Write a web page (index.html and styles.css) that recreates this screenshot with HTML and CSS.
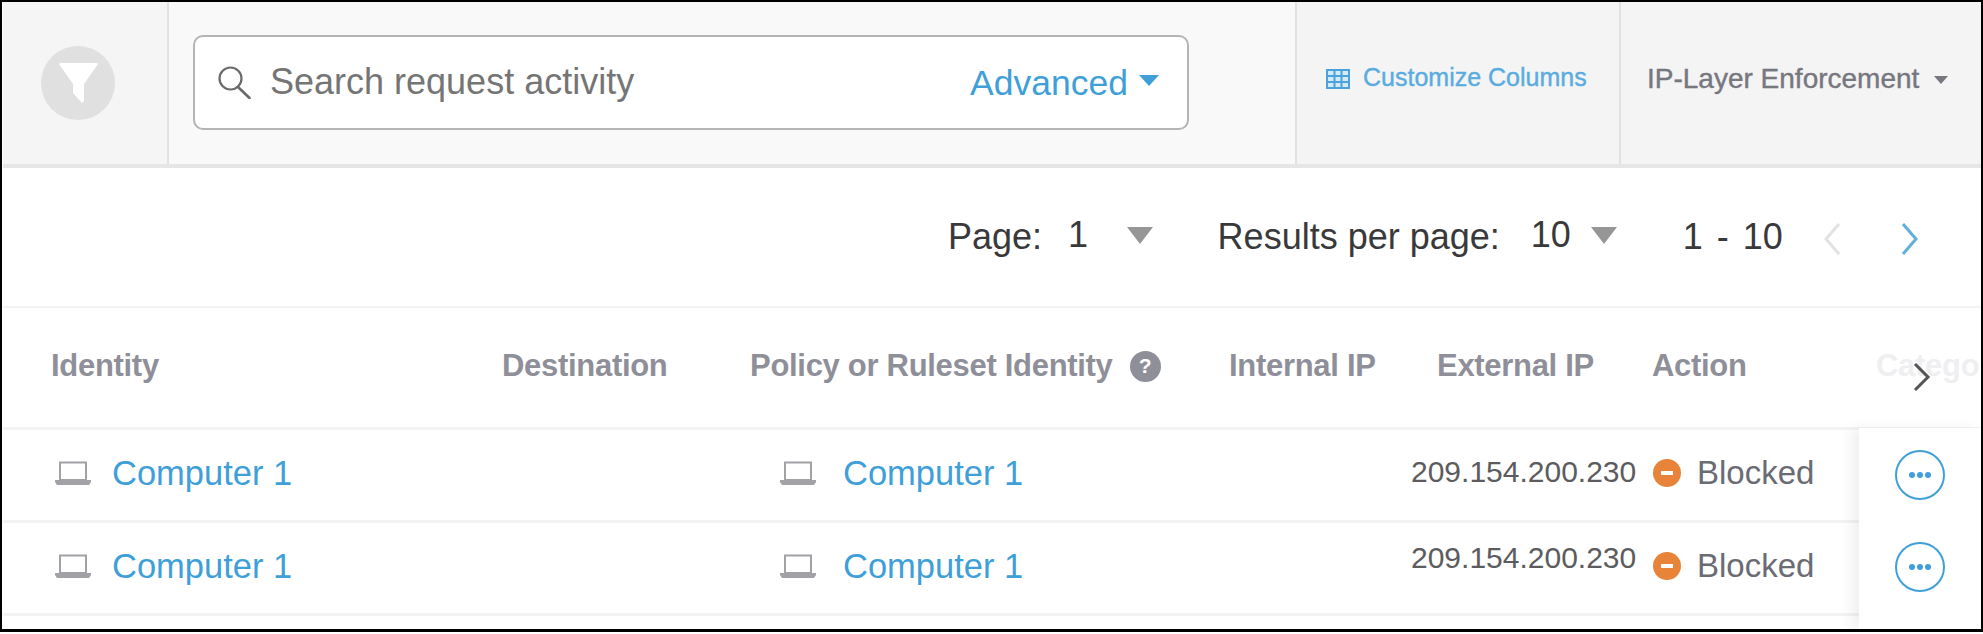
FILE: index.html
```html
<!DOCTYPE html>
<html lang="en">
<head>
<meta charset="utf-8">
<title>Request activity</title>
<link rel="stylesheet" href="styles.css">
</head>
<body>
<div class="frame">
  <header class="toolbar">
    <div class="filter-cell">
      <div class="filter-btn">
        <svg width="39" height="40" viewBox="0 0 39 40"><path d="M1 0H38L39 1L25 21V38L23 40L14 30V21L0 1Z" fill="#fff"/></svg>
      </div>
    </div>
    <div class="search-cell">
      <div class="search-box">
        <svg class="search-icon" width="33" height="33" viewBox="0 0 33 33"><circle cx="12.500" cy="12.500" r="11" fill="none" stroke="#6a6a6a" stroke-width="2.200"/><path d="M20 21l11.500 11" stroke="#6a6a6a" stroke-width="2.600" stroke-linecap="round"/></svg>
        <span class="search-text">Search request activity</span>
        <span class="advanced">Advanced</span>
        <span class="tri tri-blue"></span>
      </div>
    </div>
    <div class="cust-cell">
      <svg width="24" height="20" viewBox="0 0 24 20"><path d="M1 1h22v18H1zM1 7h22M1 13h22M8.500 1v18M15.500 1v18" fill="#d5e9f6" stroke="#4aa3da" stroke-width="2"/></svg>
      <span class="cust-text">Customize Columns</span>
    </div>
    <div class="layer-cell">
      <span class="layer-text">IP-Layer Enforcement</span>
      <span class="tri tri-small"></span>
    </div>
  </header>

  <div class="pager">
    <span class="pg-label">Page:</span>
    <span class="pg-val pg-one">1</span>
    <span class="tri tri-gray tri-page"></span>
    <span class="pg-label">Results per page:</span>
    <span class="pg-val pg-ten">10</span>
    <span class="tri tri-gray tri-results"></span>
    <span class="pg-range">1 - 10</span>
    <svg class="chev-l" width="20" height="32" viewBox="0 0 20 32"><path d="M17 1L4 16l13 15" fill="none" stroke="#e2e2e2" stroke-width="3"/></svg>
    <svg class="chev-r" width="20" height="32" viewBox="0 0 20 32"><path d="M3 1l13 15L3 31" fill="none" stroke="#63aedd" stroke-width="3"/></svg>
  </div>

  <div class="table">
    <div class="row head">
      <span class="th">Identity</span>
      <span class="th">Destination</span>
      <span class="th th-policy">Policy or Ruleset Identity <span class="help">?</span></span>
      <span class="th">Internal IP</span>
      <span class="th">External IP</span>
      <span class="th">Action</span>
      <span class="th th-cat">Catego</span>
    </div>
    <div class="row">
      <span class="cell"><svg class="laptop" width="36" height="24" viewBox="0 0 36 24"><path d="M5 1.500h26V19H5z" fill="none" stroke="#a2a2a6" stroke-width="2"/><path d="M0 19h36v2l-2 3H2l-2-3z" fill="#a2a2a6"/></svg><a class="link">Computer 1</a></span>
      <span class="cell"></span>
      <span class="cell cell-policy"><svg class="laptop" width="36" height="24" viewBox="0 0 36 24"><path d="M5 1.500h26V19H5z" fill="none" stroke="#a2a2a6" stroke-width="2"/><path d="M0 19h36v2l-2 3H2l-2-3z" fill="#a2a2a6"/></svg><a class="link">Computer 1</a></span>
      <span class="cell"></span>
      <span class="cell ip">209.154.200.230</span>
      <span class="cell"><span class="blocked-dot"></span><span class="blocked">Blocked</span></span>
    </div>
    <div class="row">
      <span class="cell"><svg class="laptop" width="36" height="24" viewBox="0 0 36 24"><path d="M5 1.500h26V19H5z" fill="none" stroke="#a2a2a6" stroke-width="2"/><path d="M0 19h36v2l-2 3H2l-2-3z" fill="#a2a2a6"/></svg><a class="link">Computer 1</a></span>
      <span class="cell"></span>
      <span class="cell cell-policy"><svg class="laptop" width="36" height="24" viewBox="0 0 36 24"><path d="M5 1.500h26V19H5z" fill="none" stroke="#a2a2a6" stroke-width="2"/><path d="M0 19h36v2l-2 3H2l-2-3z" fill="#a2a2a6"/></svg><a class="link">Computer 1</a></span>
      <span class="cell"></span>
      <span class="cell ip ip-raised">209.154.200.230</span>
      <span class="cell"><span class="blocked-dot"></span><span class="blocked">Blocked</span></span>
    </div>
    <svg class="scroll-chev" width="18" height="28" viewBox="0 0 18 28"><path d="M2 1l13 13L2 27" fill="none" stroke="#555" stroke-width="3"/></svg>
    <div class="sticky">
      <button class="more"><i></i><i></i><i></i></button>
      <button class="more"><i></i><i></i><i></i></button>
    </div>
  </div>
</div>
</body>
</html>
```
FILE: styles.css
```css
* { box-sizing: border-box; }
html, body { margin: 0; height: 100%; background: #fff; }
body { font-family: "Liberation Sans", Arial, sans-serif; overflow: hidden; }

.frame {
  width: 1983px;
  height: 632px;
  border-style: solid;
  border-color: #000;
  border-width: 2px 2px 3px 2px;
  padding-left: 1px;
  background: #fff;
  overflow: hidden;
  display: flex;
  flex-direction: column;
}

.toolbar {
  height: 166px;
  flex: none;
  display: flex;
  background: #f9f9f9;
  border-bottom: 4px solid #e6e6e6;
}
.filter-cell {
  width: 166px;
  background: #f5f5f5;
  border-right: 2px solid #e2e2e2;
  display: flex;
  align-items: center;
  padding-left: 38px;
}
.filter-btn {
  width: 74px;
  height: 74px;
  border-radius: 50%;
  background: #e0e0e0;
  display: flex;
  align-items: center;
  justify-content: center;
}
.search-cell {
  width: 1126px;
  padding: 33px 0 0 24px;
}
.search-box {
  width: 996px;
  height: 95px;
  background: #fff;
  border: 2px solid #b4b4b4;
  border-radius: 10px;
  display: flex;
  align-items: center;
  padding: 0 28px 0 23px;
  font-size: 36px;
}
.search-icon { flex: none; margin-top: -1px; }
.search-text { margin-left: 19px; margin-top: -1px; color: #757575; flex: 1; }
.advanced { color: #3f9fd9; font-size: 35.500px; margin-top: 1px; }
.tri { display: inline-block; width: 0; height: 0; border-style: solid; border-color: transparent; }
.tri-blue { border-width: 11px 10px 0; border-top-color: #3f9fd9; margin: 0 0 4px 11px; }
.cust-cell {
  width: 324px;
  background: #f4f4f4;
  border-left: 2px solid #e2e2e2;
  display: flex;
  align-items: flex-start;
  padding: 67px 0 0 29px;
}
.cust-text { margin: -6px 0 0 13px; color: #5aace0; font-size: 25px; -webkit-text-stroke: .4px #5aace0; }
.layer-cell {
  flex: 1;
  background: #f4f4f4;
  border-left: 2px solid #e2e2e2;
  display: flex;
  align-items: flex-start;
  padding: 61px 0 0 26px;
}
.layer-text { color: #77777f; font-size: 28px; -webkit-text-stroke: .4px #77777f; }
.tri-small { border-width: 8px 7px 0; border-top-color: #77777f; margin: 13px 0 0 15px; }

.pager {
  height: 140px;
  flex: none;
  display: flex;
  align-items: center;
  padding-left: 945px;
  border-bottom: 2px solid #f3f3f3;
  color: #39393b;
  font-size: 36px;
}
.pg-label { white-space: nowrap; }
.pg-val { margin-top: -4px; margin-left: 26px; }
.pg-ten { margin-left: 31px; }
.tri-gray { border-width: 17px 13px 0; border-top-color: #969696; margin-top: -4px; }
.tri-page { margin-left: 39px; margin-right: 64.500px; }
.tri-results { margin-left: 20.500px; margin-right: 65.500px; }
.pg-range { white-space: nowrap; word-spacing: 4px; }
.chev-l { margin-left: 39.500px; margin-top: 4px; }
.chev-r { margin-left: 58px; margin-top: 4px; }

.table { position: relative; flex: 1; overflow: hidden; }
.row {
  display: grid;
  grid-template-columns: 451px 248px 479px 208px 215px 224px 1fr;
  height: 93px;
  align-items: center;
  padding: 0 0 4px 48px;
  border-bottom: 3px solid #f3f3f3;
  white-space: nowrap;
}
.head { height: 122px; align-items: start; padding-top: 40px; }
.th { color: #8f8f99; font-size: 31px; font-weight: 700; letter-spacing: -.3px; }
.th-policy { display: flex; align-items: center; gap: 17px; }
.help {
  width: 31px; height: 31px; border-radius: 50%;
  background: #8f8f99; color: #fff; font-size: 21px; letter-spacing: 0;
  display: inline-flex; align-items: center; justify-content: center;
}
.th-cat { color: #efeff1; }
.cell { display: flex; align-items: center; }
.laptop { flex: none; margin-left: 4px; }
.cell-policy { padding-left: 26px; }
.link { color: #3f9fd9; font-size: 34.500px; margin-left: 21px; }
.cell-policy .link { margin-left: 27px; }
.ip { color: #5c5c5e; font-size: 30px; margin-left: -26px; margin-top: -2px; }
.ip-raised { margin-top: -16px; }
.blocked-dot {
  width: 28px; height: 28px; border-radius: 50%;
  background: #e8843a; position: relative; flex: none; margin-left: 1px;
}
.blocked-dot::after {
  content: ""; position: absolute; left: 8px; right: 8px; top: 12px; height: 4px; background: #fff;
}
.blocked { margin-left: 16px; color: #6b6b73; font-size: 33px; }

.scroll-chev { position: absolute; right: 50px; top: 55px; }
.sticky {
  position: absolute;
  right: 0; top: 120px; bottom: 0;
  width: 122px;
  background: #fff;
  box-shadow: -8px 0 12px rgba(0,0,0,.06);
  padding: 22px 0 0 36px;
  display: flex;
  flex-direction: column;
  gap: 42px;
}
.more {
  width: 50px; height: 50px; padding: 0;
  border: 2px solid #3f9fd9;
  border-radius: 50%;
  background: #fff;
  display: flex; align-items: center; justify-content: center; gap: 2px;
}
.more i { width: 6px; height: 6px; border-radius: 50%; background: #3f9fd9; }
```
